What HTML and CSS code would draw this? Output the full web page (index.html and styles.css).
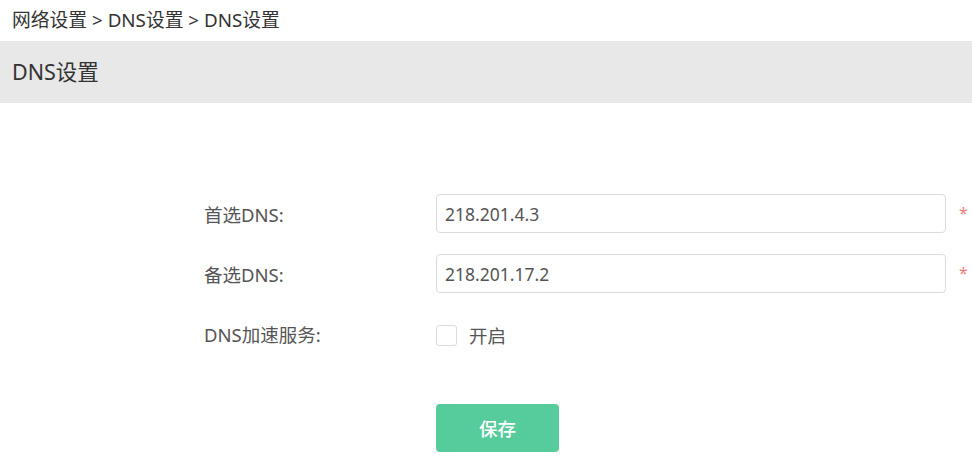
FILE: index.html
```html
<!DOCTYPE html>
<html lang="zh-CN">
  <head>
    <meta charset="UTF-8" />
    <meta name="viewport" content="width=device-width, initial-scale=1.0" />
    <title>DNS设置</title>
    <link rel="stylesheet" href="styles.css">
  </head>
  <body>
    <div class="breadcrumb">网络设置 &gt; DNS设置 &gt; DNS设置</div>
    <header>DNS设置</header>
    <form class="dns-form">
      <div class="row">
        <label for="dns1">首选DNS:</label>
        <input type="text" id="dns1" value="218.201.4.3" />
        <span class="required">*</span>
      </div>
      <div class="row">
        <label for="dns2">备选DNS:</label>
        <input type="text" id="dns2" value="218.201.17.2" />
        <span class="required">*</span>
      </div>
      <div class="row">
        <label>DNS加速服务:</label>
        <label class="check"><span class="box"></span>开启</label>
      </div>
      <div class="actions">
        <button type="button">保存</button>
      </div>
    </form>
  </body>
</html>
```

FILE: styles.css
```css
:root {
  --text-color: #333;
  --label-color: #555;
  --border-color: #dcdcdc;
  --band-color: #e8e8e8;
  --green: #56cb9b;
  --font-family: 'Noto Sans', 'Noto Sans CJK SC', sans-serif;
}

* {
  box-sizing: border-box;
}

body {
  margin: 0;
  font-family: var(--font-family);
  color: var(--text-color);
  background: #fff;
}

.breadcrumb {
  height: 41px;
  line-height: 40px;
  padding: 0 12px;
  font-size: 18.8px;
}

header {
  height: 62px;
  line-height: 62px;
  padding: 0 12px;
  background: var(--band-color);
  font-size: 21.5px;
}

.dns-form {
  margin-top: 91px;
  padding-left: 204px;
}

.row {
  display: grid;
  grid-template-columns: 232px 510px auto;
  align-items: center;
  height: 39px;
  margin-bottom: 21px;
  font-size: 18.5px;
  color: var(--label-color);
}

.row input {
  height: 39px;
  width: 100%;
  padding: 0 8px;
  border: 1px solid var(--border-color);
  border-radius: 4px;
  font-family: var(--font-family);
  font-size: 17.5px;
  color: var(--label-color);
  outline: none;
}

.required {
  margin-left: 13px;
  color: #f07c7c;
  font-size: 16px;
  padding-bottom: 2px;
}

.check {
  display: flex;
  align-items: center;
  padding-top: 3px;
}

.box {
  width: 21px;
  height: 21px;
  border: 1px solid var(--border-color);
  border-radius: 3px;
  margin-right: 12px;
}

.actions {
  margin-top: 51px;
  padding-left: 232px;
}

button {
  width: 123px;
  height: 48px;
  border: none;
  border-radius: 4px;
  background: var(--green);
  color: #fff;
  font-family: var(--font-family);
  font-size: 18.5px;
  font-weight: 500;
  cursor: pointer;
}
```
